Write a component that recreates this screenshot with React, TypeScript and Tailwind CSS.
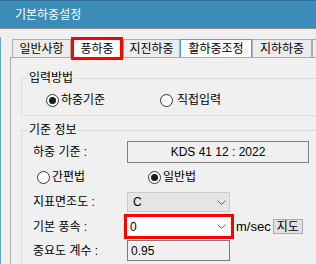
const Radio = ({ checked }: { checked?: boolean }) => (
  <span className="w-[13px] h-[13px] shrink-0 rounded-full border border-[#333333] bg-white flex items-center justify-center">
    {checked && <span className="w-[7px] h-[7px] rounded-full bg-[#1a1a1a]" />}
  </span>
);

const Chevron = () => (
  <svg width="9" height="5" viewBox="0 0 9 5">
    <path d="M0.5 0.5 L4.5 4.5 L8.5 0.5" stroke="#606060" strokeWidth="1" fill="none" />
  </svg>
);

const tabs = [
  { label: "일반사항", w: "w-[59px]" },
  { label: "풍하중", w: "w-[52px]", active: true },
  { label: "지진하중", w: "w-[57px]" },
  { label: "활하중조정", w: "w-[72px]", focus: true },
  { label: "지하하중", w: "w-[60px]" },
  { label: "", w: "w-[30px]" },
];

export default function App() {
  return (
    <div className="w-[316px] h-[264px] overflow-hidden bg-[#f0f0f0] text-[12px] leading-[14px] text-black font-['Liberation_Sans','Noto_Sans_CJK_KR',sans-serif]">
      {/* title bar */}
      <div className="h-[29px] bg-[#3c8cba] border-t border-[#2f7199] border-b border-b-[#8d8d8d] flex items-center pl-[15px] text-white text-[12px]">
        기본하중설정
      </div>

      <div className="border-l border-[#6aa6cf] h-[235px]">
        {/* tabs */}
        <div className="flex items-end h-[20px] mt-[8px] ml-[11px]">
          {tabs.map((t) =>
            t.active ? (
              <div
                key={t.label}
                className={`${t.w} h-[23px] shrink-0 -mb-[3px] relative z-10 bg-white border-[3px] border-[#ff0000] flex items-center justify-center whitespace-nowrap`}
              >
                {t.label}
              </div>
            ) : (
              <div
                key={t.label + t.w}
                className={`${t.w} h-[18px] shrink-0 border border-b-0 flex items-center justify-center whitespace-nowrap ${
                  t.focus ? "bg-[#fbfbfb] border-[#5a9ee6]" : "bg-[#ececec] border-[#adadad]"
                }`}
              >
                {t.label}
              </div>
            )
          )}
        </div>

        {/* tab panel */}
        <div className="ml-[9px] w-[320px] h-[210px] border-l border-t border-[#adadad] pl-[10px] pt-[13px]">
          <fieldset className="border border-[#dcdcdc] pt-[7px] pb-[7px]">
            <legend className="ml-[6px] px-[1px]">입력방법</legend>
            <div className="flex items-center h-[16px] pl-[24px]">
              <div className="flex items-center gap-[2px] w-[114px]">
                <Radio checked />
                <span>하중기준</span>
              </div>
              <div className="flex items-center gap-[4px]">
                <Radio />
                <span>직접입력</span>
              </div>
            </div>
          </fieldset>

          <fieldset className="mt-[7px] border border-[#dcdcdc] h-[150px]">
            <legend className="ml-[6px] px-[1px]">기준 정보</legend>

            <div className="pl-[11px]">
              <div className="flex items-center h-[22px] mt-[4px]">
                <span className="w-[94px]">하중 기준 :</span>
                <div className="w-[182px] h-[22px] border border-[#828282] flex items-center justify-center">
                  KDS 41 12 : 2022
                </div>
              </div>

              <div className="flex items-center h-[28px] pl-[4px]">
                <div className="flex items-center gap-[2px] w-[111px]">
                  <Radio />
                  <span>간편법</span>
                </div>
                <div className="flex items-center gap-[2px]">
                  <Radio checked />
                  <span>일반법</span>
                </div>
              </div>

              <div className="flex items-center h-[20px] mt-[1px]">
                <span className="w-[94px]">지표면조도 :</span>
                <div className="w-[103px] h-[20px] bg-[#e5e5e5] border border-[#cccccc] flex items-center justify-between pl-[5px] pr-[3px]">
                  <span>C</span>
                  <Chevron />
                </div>
              </div>

              <div className="flex items-center h-[25px] mt-[2px]">
                <span className="w-[91px]">기본 풍속 :</span>
                <div className="w-[110px] h-[25px] border-[3px] border-[#ff0000] bg-white flex items-center justify-between pl-[3px] pr-[5px]">
                  <span>0</span>
                  <Chevron />
                </div>
                <span className="ml-[2px] text-[13px]">m/sec</span>
                <div className="ml-[2px] w-[30px] h-[15px] bg-[#e1e1e1] border border-[#adadad] flex items-center justify-center">
                  지도
                </div>
              </div>

              <div className="flex items-center h-[21px] mt-[1px]">
                <span className="w-[94px]">중요도 계수 :</span>
                <div className="w-[103px] h-[21px] border border-[#7a7a7a] flex items-center pl-[3px]">
                  0.95
                </div>
              </div>
            </div>
          </fieldset>
        </div>
      </div>
    </div>
  );
}
